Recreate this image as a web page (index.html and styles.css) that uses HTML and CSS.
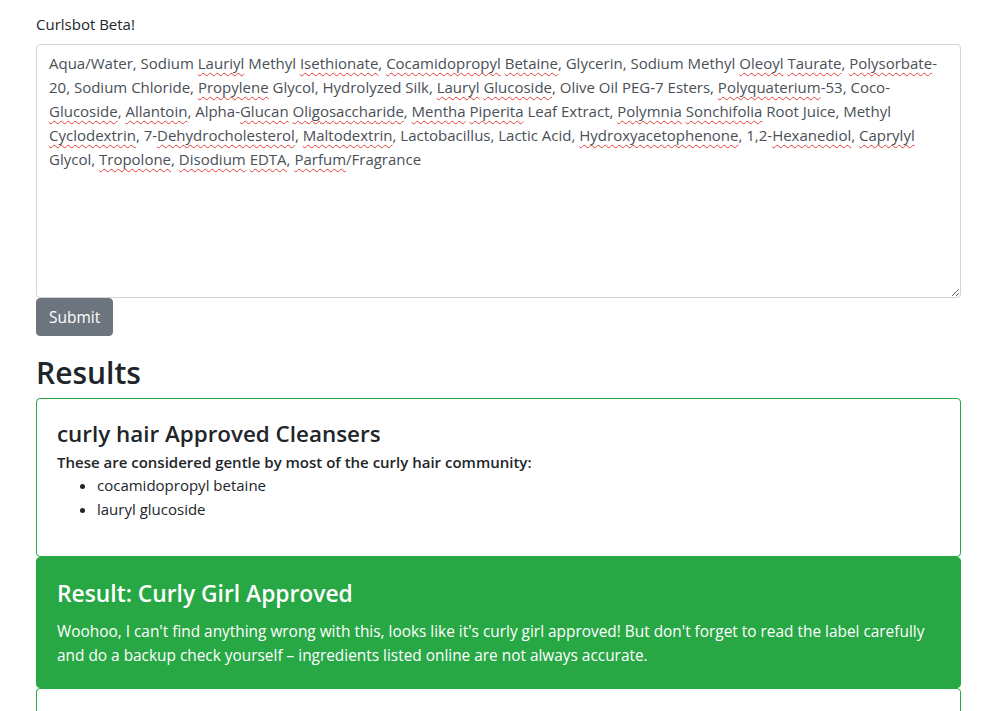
FILE: index.html
```html
<!DOCTYPE html>
<html lang="en">
<head>
    <meta charset="UTF-8">
    <title>Curlsbot Beta</title>
    <link rel="stylesheet" href="styles.css">
</head>
<body>
	<div class="container">
		<p class="intro">Curlsbot Beta!</p>
		<form id="iForm" class="check">
			<div class="ingredients" contenteditable="true" spellcheck="false">Aqua/Water, Sodium <span class="typo">Lauriyl</span> Methyl <span class="typo">Isethionate</span>, <span class="typo">Cocamidopropyl</span> <span class="typo">Betaine</span>, Glycerin, Sodium Methyl <span class="typo">Oleoyl</span> <span class="typo">Taurate</span>, <span class="typo">Polysorbate</span>-20, Sodium Chloride, <span class="typo">Propylene</span> Glycol, Hydrolyzed Silk, <span class="typo">Lauryl</span> <span class="typo">Glucoside</span>, Olive Oil PEG-7 Esters, <span class="typo">Polyquaterium</span>-53, Coco-<span class="typo">Glucoside</span>, <span class="typo">Allantoin</span>, Alpha-<span class="typo">Glucan</span> <span class="typo">Oligosaccharide</span>, <span class="typo">Mentha</span> <span class="typo">Piperita</span> Leaf Extract, <span class="typo">Polymnia</span> <span class="typo">Sonchifolia</span> Root Juice, Methyl <span class="typo">Cyclodextrin</span>, 7-<span class="typo">Dehydrocholesterol</span>, <span class="typo">Maltodextrin</span>, Lactobacillus, Lactic Acid, <span class="typo">Hydroxyacetophenone</span>, 1,2-<span class="typo">Hexanediol</span>, <span class="typo">Caprylyl</span> Glycol, <span class="typo">Tropolone</span>, <span class="typo">Disodium</span> <span class="typo">EDTA</span>, <span class="typo">Parfum</span>/Fragrance</div>
			<button id="button" class="btn" type="button">Submit</button>
		</form>

		<h2 class="results-title">Results</h2>
		<div class="card">
			<h4>curly hair Approved Cleansers</h4>
			<p class="lead-in">These are considered gentle by most of the curly hair community:</p>
			<ul>
				<li>cocamidopropyl betaine</li>
				<li>lauryl glucoside</li>
			</ul>
		</div>
		<div class="card success">
			<h4>Result: Curly Girl Approved</h4>
			<p>Woohoo, I can't find anything wrong with this, looks like it's curly girl approved! But don't forget to read the label carefully and do a backup check yourself – ingredients listed online are not always accurate.</p>
		</div>
		<div class="card">
			<h4>Other Ingredients</h4>
			<p>&nbsp;</p>
		</div>
	</div>
</body>
</html>
```

FILE: styles.css
```css
body {
	margin: 0;
	background: #fff;
	color: #212529;
	font-family: "Open Sans", "Noto Sans", sans-serif;
	font-size: 15px;
	line-height: 24px;
}
.container {
	padding: 12px 31px 0 36px;
}
.intro {
	margin: 0 0 8px;
}
.check {
	margin: 0 0 18px;
}
.ingredients {
	height: 240px;
	padding: 6px 12px;
	border: 1px solid #ced4da;
	border-radius: 4px;
	color: #495057;
	overflow: auto;
	resize: vertical;
	outline-style: none;
}
.typo {
	text-decoration: underline wavy #e0403a;
	text-decoration-thickness: 1px;
	text-underline-offset: 3px;
	text-decoration-skip-ink: none;
}
.btn {
	display: block;
	padding: 7px 12px;
	border: 1px solid #6c757d;
	border-radius: 4px;
	background: #6c757d;
	color: #fff;
	font-family: inherit;
	font-size: 15.5px;
	line-height: 22px;
}
.results-title {
	margin: 0 0 6px;
	font-size: 30px;
	font-weight: 600;
	line-height: 38px;
}
.card {
	padding: 20px;
	border: 1px solid #28a745;
	border-radius: 4px;
}
.card h4 {
	margin: 0 0 3px;
	font-size: 22.4px;
	font-weight: 600;
	line-height: 29px;
}
.lead-in {
	margin: 0;
	font-weight: 600;
	line-height: 22px;
}
.card ul {
	margin: 0 0 15px;
	padding-left: 40px;
}
.success {
	padding: 21px 20px 19px;
	background: #28a745;
	color: #fff;
}
.success h4 {
	margin-bottom: 12px;
	font-size: 22.8px;
}
.success p {
	margin: 0;
	font-size: 15.4px;
}
```
